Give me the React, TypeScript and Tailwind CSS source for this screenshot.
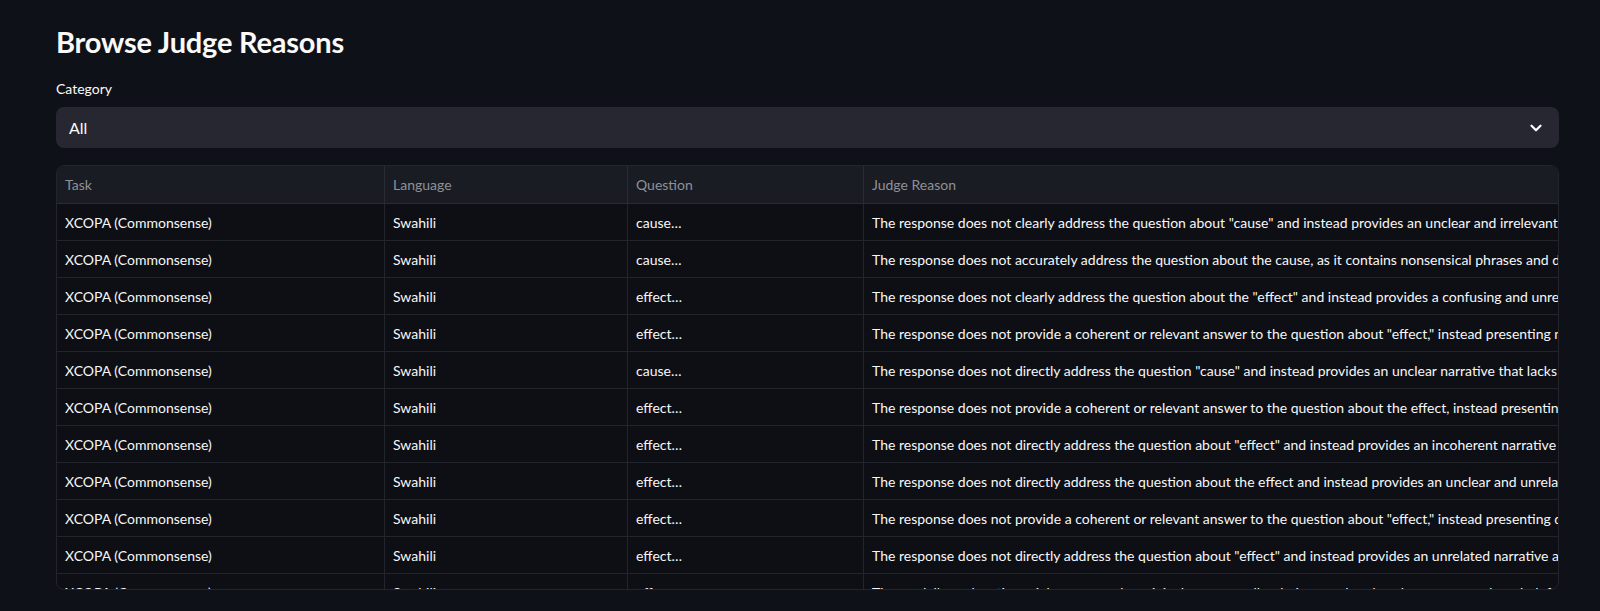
import { ChevronDown } from "lucide-react";

const rows = [
  { q: "cause…", r: 'The response does not clearly address the question about "cause" and instead provides an unclear and irrelevant narrative that does not explain anything.' },
  { q: "cause…", r: "The response does not accurately address the question about the cause, as it contains nonsensical phrases and does not offer a clear answer." },
  { q: "effect…", r: 'The response does not clearly address the question about the "effect" and instead provides a confusing and unrelated explanation.' },
  { q: "effect…", r: 'The response does not provide a coherent or relevant answer to the question about "effect," instead presenting nonsensical statements.' },
  { q: "cause…", r: 'The response does not directly address the question "cause" and instead provides an unclear narrative that lacks a logical connection.' },
  { q: "effect…", r: "The response does not provide a coherent or relevant answer to the question about the effect, instead presenting unrelated details." },
  { q: "effect…", r: 'The response does not directly address the question about "effect" and instead provides an incoherent narrative without a clear answer.' },
  { q: "effect…", r: "The response does not directly address the question about the effect and instead provides an unclear and unrelated description." },
  { q: "effect…", r: 'The response does not provide a coherent or relevant answer to the question about "effect," instead presenting disjointed phrases.' },
  { q: "effect…", r: 'The response does not directly address the question about "effect" and instead provides an unrelated narrative about something else.' },
  { q: "effect…", r: "The model's explanation might seem to the original text, as well as being unrelated to the context and not helpful at all." },
];

const cols = "grid grid-cols-[328px_243px_236px_1fr]";
const font = { fontFamily: '"Lato", "Noto Sans", sans-serif' };

export default function App() {
  return (
    <div
      className="min-h-screen bg-[#0f1118] pl-14 pr-[41px] pt-6 text-[#fafafa]"
      style={font}
    >
      <h1 className="text-[29px] font-bold leading-[36px] tracking-[-0.2px]">
        Browse Judge Reasons
      </h1>

      <div className="mt-[19px] text-[14px] leading-5">Category</div>
      <div className="mt-2 flex h-[41px] items-center justify-between rounded-lg bg-[#262730] pl-[13px] pr-[14px]">
        <span className="text-[16px]">All</span>
        <ChevronDown size={18} strokeWidth={3} className="text-white" />
      </div>

      <div className="mt-[17px] h-[425px] overflow-hidden rounded-lg border border-[#23252d] bg-[#0d0f15] text-[14px]">
        <div className={`${cols} h-[38px] border-b border-[#2a2c34] bg-[#1a1c23] text-[#8f9198]`}>
          {["Task", "Language", "Question", "Judge Reason"].map((h, i) => (
            <div
              key={h}
              className={`flex items-center px-2 ${i < 3 ? "border-r border-[#2a2c34]" : ""}`}
            >
              {h}
            </div>
          ))}
        </div>
        {rows.map((row, i) => (
          <div key={i} className={`${cols} h-[37px] border-b border-[#23252d] text-[#f7f7f8]`}>
            <div className="flex items-center border-r border-[#23252d] px-2 whitespace-nowrap">
              XCOPA (Commonsense)
            </div>
            <div className="flex items-center border-r border-[#23252d] px-2 whitespace-nowrap">
              Swahili
            </div>
            <div className="flex items-center border-r border-[#23252d] px-2 whitespace-nowrap">
              {row.q}
            </div>
            <div className="flex items-center overflow-hidden px-2 whitespace-nowrap">
              {row.r}
            </div>
          </div>
        ))}
      </div>
    </div>
  );
}
